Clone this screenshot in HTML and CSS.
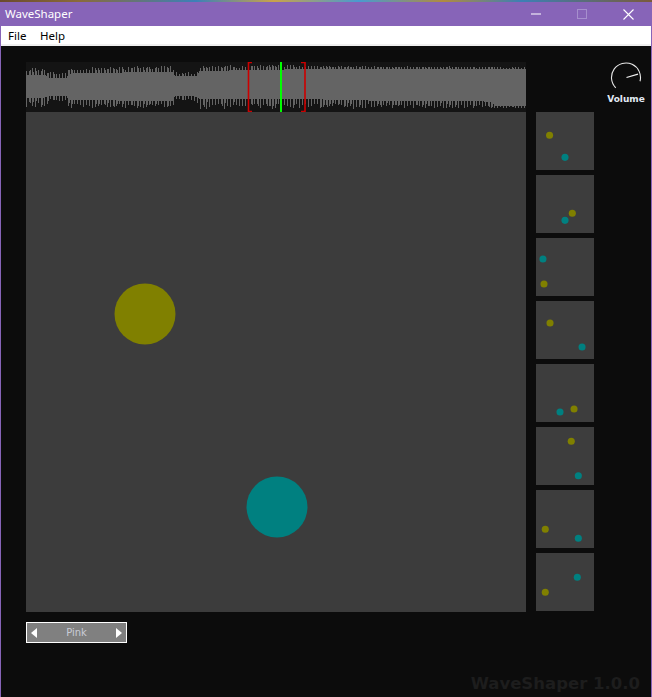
FILE: index.html
```html
<!DOCTYPE html>
<html>
<head>
<meta charset="utf-8">
<title>WaveShaper</title>
<link rel="stylesheet" href="styles.css">
</head>
<body>
<div class="desk"></div>
<div class="window">
  <div class="titlebar">
    <span class="title">WaveShaper</span>
    <div class="controls">
      <span class="btn"><svg width="10" height="10" viewBox="0 0 10 10"><rect x="0" y="4.5" width="10" height="1" fill="#ffffff"/></svg></span>
      <span class="btn"><svg width="10" height="10" viewBox="0 0 10 10"><rect x="0.5" y="0.5" width="9" height="9" fill="none" stroke="#a68fcd" stroke-width="1"/></svg></span>
      <span class="btn"><svg width="11" height="11" viewBox="0 0 11 11"><path d="M0.5 0.5L10.5 10.5M10.5 0.5L0.5 10.5" stroke="#ffffff" stroke-width="1.1" fill="none"/></svg></span>
    </div>
  </div>
  <div class="menubar">
    <span class="menu-item file">File</span>
    <span class="menu-item">Help</span>
  </div>
  <div class="content">
    <div class="grid">
      <div class="wave">
        <svg width="500" height="50" viewBox="0 0 500 50" shape-rendering="crispEdges">
          <rect width="500" height="50" fill="#141414"/>
          <path id="wavepath" d="" stroke="#646464" stroke-width="1" fill="none"/>
          <path d="M226 0.5H222.5V49.5H226" stroke="#cc0000" stroke-width="1.6" fill="none" shape-rendering="auto"/>
          <path d="M275 0.5H279V49.5H275" stroke="#cc0000" stroke-width="1.6" fill="none" shape-rendering="auto"/>
          <rect x="254" y="0" width="2" height="50" fill="#00ff00"/>
        </svg>
      </div>
      <div class="spacer"></div>
      <div class="knob">
        <svg width="47" height="32" viewBox="0 0 47 32">
          <path d="M11.75 25.75A14.5 14.5 0 1 1 36 19.25" stroke="#e8e8e8" stroke-width="1.1" fill="none"/>
          <path d="M22.5 15.5L34 12.2" stroke="#f2f2f2" stroke-width="1.2" fill="none"/>
        </svg>
        <span class="knob-label">Volume</span>
      </div>
      <div class="canvas">
        <svg width="500" height="500" viewBox="0 0 500 500">
          <circle cx="119" cy="202" r="30.5" fill="#808000"/>
          <circle cx="251" cy="395" r="30.5" fill="#008080"/>
        </svg>
      </div>
      <div class="thumbs">
        <div class="thumb"><svg viewBox="0 0 500 500"><circle cx="117" cy="201" r="30.5" fill="#808000"/><circle cx="250" cy="391" r="30.5" fill="#008080"/></svg></div>
        <div class="thumb"><svg viewBox="0 0 500 500"><circle cx="313" cy="330" r="30.5" fill="#808000"/><circle cx="250" cy="391" r="30.5" fill="#008080"/></svg></div>
        <div class="thumb"><svg viewBox="0 0 500 500"><circle cx="69" cy="397" r="30.5" fill="#808000"/><circle cx="60" cy="181" r="30.5" fill="#008080"/></svg></div>
        <div class="thumb"><svg viewBox="0 0 500 500"><circle cx="121" cy="190" r="30.5" fill="#808000"/><circle cx="397" cy="397" r="30.5" fill="#008080"/></svg></div>
        <div class="thumb"><svg viewBox="0 0 500 500"><circle cx="328" cy="388" r="30.5" fill="#808000"/><circle cx="207" cy="414" r="30.5" fill="#008080"/></svg></div>
        <div class="thumb"><svg viewBox="0 0 500 500"><circle cx="304" cy="123" r="30.5" fill="#808000"/><circle cx="365" cy="420" r="30.5" fill="#008080"/></svg></div>
        <div class="thumb"><svg viewBox="0 0 500 500"><circle cx="80" cy="339" r="30.5" fill="#808000"/><circle cx="365" cy="416" r="30.5" fill="#008080"/></svg></div>
        <div class="thumb"><svg viewBox="0 0 500 500"><circle cx="80" cy="339" r="30.5" fill="#808000"/><circle cx="356" cy="209" r="30.5" fill="#008080"/></svg></div>
      </div>
      <div class="spacer"></div>
      <div class="selector">
        <svg width="6" height="10" viewBox="0 0 6 10"><path d="M6 0L0 5L6 10Z" fill="#ffffff"/></svg>
        <span class="sel-text">Pink</span>
        <svg width="6" height="10" viewBox="0 0 6 10"><path d="M0 0L6 5L0 10Z" fill="#ffffff"/></svg>
      </div>
    </div>
    <div class="footer">WaveShaper 1.0.0</div>
  </div>
</div>
<script src="script.js"></script>
</body>
</html>
```

FILE: styles.css
```css
* { box-sizing: border-box; }
html, body {
  margin: 0;
  padding: 0;
  width: 652px;
  height: 697px;
  overflow: hidden;
  background: #0c0c0c;
}
body {
  font-family: "Noto Sans", "DejaVu Sans", sans-serif;
}
.desk {
  height: 2px;
  background: linear-gradient(90deg, #6a4a2e 0%, #8a6a3a 12%, #3d80b8 30%, #c9a24a 42%, #4a9ad0 55%, #b08a40 68%, #3d7fb5 80%, #7a5a3a 100%);
}
.window {
  height: 695px;
  display: flex;
  flex-direction: column;
  border-left: 1px solid #8764b8;
  border-right: 1px solid #8764b8;
}
.titlebar {
  height: 24px;
  background: #8764b8;
  display: flex;
  align-items: center;
  justify-content: space-between;
  color: #ffffff;
}
.title {
  font-size: 11.5px;
  padding-left: 4px;
  line-height: 24px;
}
.controls {
  display: flex;
  height: 24px;
}
.btn {
  width: 46px;
  height: 24px;
  display: flex;
  align-items: center;
  justify-content: center;
}
.menubar {
  height: 20px;
  background: #ffffff;
  border-bottom: 2px solid #f0f0f0;
  display: flex;
  align-items: center;
  padding: 2px 0 0 7px;
  font-size: 11.5px;
  color: #000000;
}
.menu-item {
  line-height: 16px;
}
.menu-item.file {
  width: 32px;
}
.content {
  flex: 1;
  background: #0c0c0c;
  display: flex;
  flex-direction: column;
  padding: 16px 0 0 25px;
}
.grid {
  display: grid;
  grid-template-columns: 500px 58px 47px;
  grid-template-rows: 50px 500px auto;
  column-gap: 10px;
}
.wave svg, .canvas svg {
  display: block;
}
.knob {
  display: flex;
  flex-direction: column;
  align-items: center;
}
.knob svg {
  display: block;
}
.knob-label {
  font-family: "DejaVu Sans", sans-serif;
  font-weight: bold;
  font-size: 9px;
  line-height: 11px;
  color: #e2eaf4;
  padding-right: 3px;
}
.canvas {
  background: #3c3c3c;
  width: 500px;
  height: 500px;
}
.thumbs {
  display: flex;
  flex-direction: column;
  gap: 5px;
}
.thumb {
  width: 58px;
  height: 58px;
  background: #3d3d3d;
}
.thumb svg {
  display: block;
  width: 58px;
  height: 58px;
}
.selector {
  margin-top: 10px;
  width: 101px;
  height: 21px;
  border: 1px solid #ffffff;
  background: #808080;
  display: flex;
  align-items: center;
  justify-content: space-between;
  padding: 0 4px;
}
.selector svg {
  display: block;
}
.sel-text {
  font-family: "DejaVu Sans", sans-serif;
  font-size: 10px;
  color: #c9ccd6;
  line-height: 12px;
}
.footer {
  margin-top: auto;
  text-align: right;
  padding: 0 11px 3px 0;
  font-family: "DejaVu Sans", sans-serif;
  font-weight: bold;
  font-size: 16.5px;
  line-height: 20px;
  color: #1d1d1d;
}
```

FILE: script.js
```js
(function () {
  var path = document.getElementById('wavepath');
  if (!path) return;
  var cy = 24.5;
  var seed = 12345;
  function rnd() {
    seed = (seed * 16807) % 2147483647;
    return (seed - 1) / 2147483646;
  }
  // [screenX, solidTop, spikeTop, solidBottom, spikeBottom]
  var K = [
    [26, 12, 19, 11, 21],
    [44, 12, 19, 11, 21],
    [48, 9, 15, 9, 16.5],
    [66, 9, 15, 9, 16.5],
    [68, 13, 19, 13, 22],
    [120, 14, 20, 14, 22],
    [172, 15, 21, 14, 22],
    [175, 10.5, 15, 9, 13.5],
    [196, 10.5, 15, 10, 16],
    [199, 15.5, 21.5, 12.5, 23],
    [280, 17, 22, 12, 22.5],
    [370, 18, 20.5, 14, 22],
    [490, 18, 20, 15, 22],
    [495, 17.5, 19.5, 19, 22],
    [526, 17.5, 19.5, 19, 22]
  ];
  function interp(x, i) {
    for (var k = 0; k < K.length - 1; k++) {
      var a = K[k], b = K[k + 1];
      if (x >= a[0] && x <= b[0]) {
        var t = (x - a[0]) / ((b[0] - a[0]) || 1);
        return a[i] + (b[i] - a[i]) * t;
      }
    }
    return K[K.length - 1][i];
  }
  var d = '';
  for (var x = 0; x < 500; x++) {
    var sx = x + 26;
    var ht = interp(sx, 1), st = interp(sx, 2);
    var hb = interp(sx, 3), sb = interp(sx, 4);
    var top = ht, bot = hb;
    var m = x % 3;
    if (m === 0) {
      top = ht + (st - ht) * (0.45 + 0.55 * rnd());
      bot = hb + (sb - hb) * (0.45 + 0.55 * rnd());
    } else if (m === 1 && rnd() < 0.35) {
      top = ht + (st - ht) * (0.3 + 0.5 * rnd());
      bot = hb + (sb - hb) * (0.3 + 0.5 * rnd());
    }
    d += 'M' + (x + 0.5) + ' ' + (cy - top).toFixed(1) + 'V' + (cy + bot).toFixed(1);
  }
  path.setAttribute('d', d);
})();
```
